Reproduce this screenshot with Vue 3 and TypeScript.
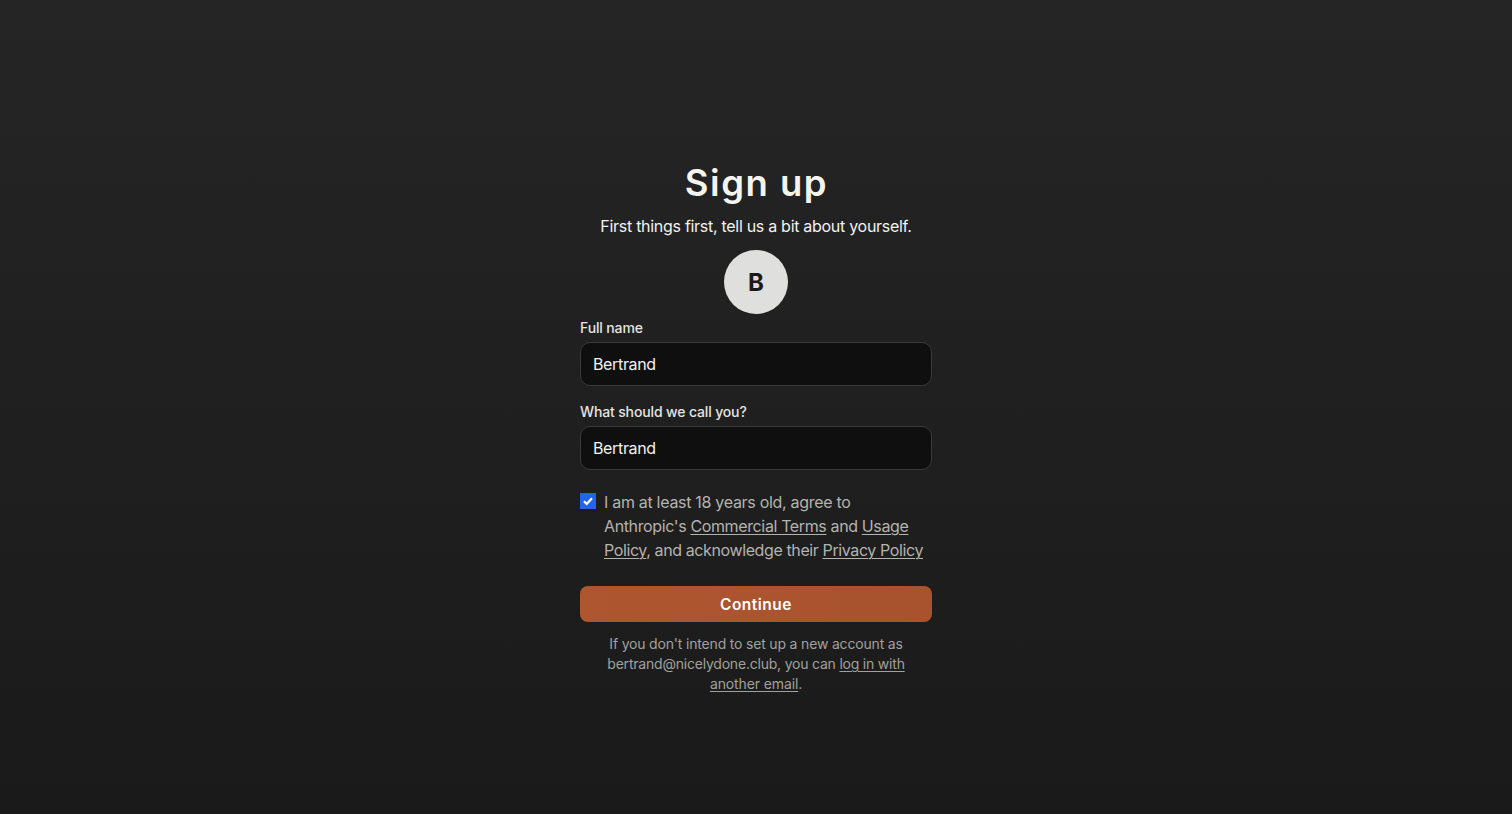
<script setup lang="ts">
import { computed, ref } from 'vue'

const fullName = ref<string>('Bertrand')
const nickname = ref<string>('Bertrand')
const accepted = ref<boolean>(true)
const initial = computed<string>(() => fullName.value.charAt(0).toUpperCase())
</script>

<template>
  <main class="page">
    <form class="signup" @submit.prevent>
      <h1 class="title">Sign up</h1>
      <p class="subtitle">First things first, tell us a bit about yourself.</p>
      <div class="avatar">{{ initial }}</div>

      <label class="label" for="full-name">Full name</label>
      <input id="full-name" v-model="fullName" class="field" type="text" />

      <label class="label second" for="nickname">What should we call you?</label>
      <input id="nickname" v-model="nickname" class="field" type="text" />

      <label class="consent">
        <input v-model="accepted" class="native" type="checkbox" />
        <span class="box" :class="{ on: accepted }">
          <svg v-if="accepted" viewBox="0 0 16 16" width="16" height="16">
            <path d="M3.9 8.3 L6.7 10.9 L12 5.2" fill="none" stroke="#fff" stroke-width="2.2" />
          </svg>
        </span>
        <span class="terms">
          <span class="l1">I am at least 18 years old, agree to</span><br />
          <span class="l2">Anthropic's <a href="#">Commercial Terms</a> and <a href="#">Usage</a></span><br />
          <span class="l3"><a href="#">Policy</a>, and acknowledge their <a href="#">Privacy Policy</a></span>
        </span>
      </label>

      <button class="continue" type="submit">Continue</button>

      <p class="note">
        <span class="n1">If you don't intend to set up a new account as</span><br />
        <span class="n2">bertrand@nicelydone.club, you can <a href="#">log in with</a></span><br />
        <span class="n3"><a href="#">another email</a>.</span>
      </p>
    </form>
  </main>
</template>

<style>
body {
  margin: 0;
  background: #1a1a1a;
}
</style>

<style scoped>
.page {
  box-sizing: border-box;
  height: 100vh;
  min-height: 814px;
  padding-top: 160px;
  display: flex;
  justify-content: center;
  align-items: flex-start;
  background: linear-gradient(#252525, #1a1a1a);
  font-family: Inter, "Liberation Sans", sans-serif;
  font-size: 16px;
  color: #f2f2f0;
}
.signup {
  width: 352px;
  display: flex;
  flex-direction: column;
  white-space: nowrap;
}
.title {
  margin: 0;
  height: 54px;
  line-height: 47px;
  text-align: center;
  text-indent: 1px;
  font-size: 36.5px;
  font-weight: 600;
  letter-spacing: 1.5px;
  color: #f5f4ef;
}
.subtitle {
  margin: 0 -20px;
  height: 35.5px;
  line-height: 24px;
  text-align: center;
  letter-spacing: -0.29px;
}
.avatar {
  align-self: center;
  width: 64px;
  height: 64px;
  border-radius: 50%;
  background: #dfdfdd;
  color: #1a1a19;
  text-align: center;
  line-height: 65px;
  font-size: 24px;
  font-weight: 700;
}
.label {
  margin-top: 4.5px;
  height: 24px;
  line-height: 20px;
  font-size: 14px;
  font-weight: 500;
  letter-spacing: -0.14px;
  color: #e4e4e1;
}
.label.second {
  margin-top: 16px;
}
.field {
  box-sizing: border-box;
  width: 352px;
  height: 44px;
  padding: 0 12px;
  border: 1px solid #3a3a3a;
  border-radius: 10px;
  outline: none;
  background: #0f0f0f;
  color: #f2f2f0;
  font: inherit;
  letter-spacing: -0.35px;
}
.consent {
  margin-top: 20px;
  display: flex;
  gap: 8px;
  color: #b3b3b0;
  line-height: 24px;
}
.native {
  display: none;
}
.box {
  flex: none;
  width: 16px;
  height: 16px;
  margin-top: 3.4px;
  background: #fff;
}
.box.on {
  background: #2463eb;
}
.box svg {
  display: block;
}
a {
  color: inherit;
  text-decoration: underline;
  text-underline-offset: 2px;
  text-decoration-thickness: 1px;
}
.l1 {
  letter-spacing: -0.3px;
}
.l2 {
  letter-spacing: -0.37px;
}
.l3 {
  letter-spacing: -0.39px;
}
.continue {
  margin-top: 24px;
  height: 36px;
  padding: 0;
  border: 0;
  border-radius: 8px;
  background: linear-gradient(90deg, #ae5630, #a8522e);
  color: #fff;
  font-family: Inter, sans-serif;
  font-size: 15.5px;
  font-weight: 600;
  letter-spacing: 0.5px;
}
.note {
  margin: 12px 0 0;
  line-height: 20px;
  text-align: center;
  font-size: 14px;
  color: #a0a09e;
}
.n1 {
  letter-spacing: -0.18px;
}
.n2 {
  letter-spacing: -0.21px;
}
.n3 {
  letter-spacing: -0.12px;
}
</style>
